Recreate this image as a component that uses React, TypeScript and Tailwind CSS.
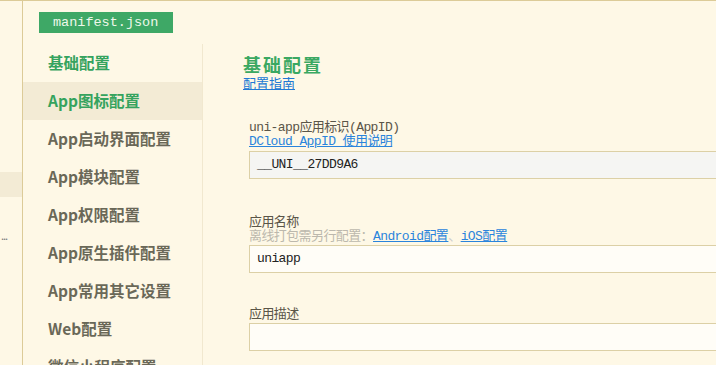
const navItems = [
  "基础配置",
  "App图标配置",
  "App启动界面配置",
  "App模块配置",
  "App权限配置",
  "App原生插件配置",
  "App常用其它设置",
  "Web配置",
  "微信小程序配置",
];

const mono = "font-['Liberation_Mono','Noto_Sans_CJK_SC',monospace] tracking-[-0.6px]";

export default function App() {
  return (
    <div className="w-[716px] h-[365px] overflow-hidden bg-[#fef8e6] border-t border-[#dccb98] flex font-['Noto_Sans_CJK_SC',sans-serif]">
      {/* 左侧窄栏 */}
      <div className="w-[23px] shrink-0 border-r border-[#dccb98] flex flex-col pt-[171px]">
        <div className="h-[25px] bg-[#f3ebd5]" />
        <div className="mt-[32px] pl-[1px] text-[11px] leading-[12px] text-[#777] tracking-[-1px]">...</div>
      </div>

      <div className="flex-1 flex flex-col min-w-0">
        {/* tab */}
        <div className="h-[43px] pl-[16px] pt-[11px]">
          <div className="w-[134px] h-[21px] bg-[#3ea866] text-[#eef8ea] text-[13.5px] leading-[21px] pl-[14px] font-['Liberation_Mono',monospace]">
            manifest.json
          </div>
        </div>

        <div className="flex flex-1 min-h-0">
          {/* 导航 */}
          <div className="w-[180px] shrink-0 border-r border-[#f1e8cf]">
            {navItems.map((item, i) => (
              <div
                key={item}
                className={`h-[38px] flex items-center pl-[25px] text-[15.5px] font-bold ${
                  i === 1 ? "bg-[#f3ebd5]" : ""
                } ${i < 2 ? "text-[#35a35e]" : "text-[#6a6858]"}`}
              >
                {item}
              </div>
            ))}
          </div>

          {/* 内容 */}
          <div className="flex-1 min-w-0 pl-[40px] pt-[10px]">
            <div className="text-[18px] leading-[20px] font-bold text-[#3aa862] tracking-[2px]">基础配置</div>
            <a className="block mt-[1px] text-[13px] leading-[16px] text-[#2179d4] underline w-fit">配置指南</a>

            <div className={`pl-[6px] mt-[30px] ${mono} text-[13px]`}>
              <div className="leading-[14px] text-[#5a5548]">uni-app应用标识(AppID)</div>
              <a className="block leading-[14px] text-[#2a84dc] underline w-fit">DCloud AppID 使用说明</a>
              <div className="mt-[2px] w-[600px] h-[28px] bg-[#f5f5f3] border border-[#dcd0a6] pl-[7px] leading-[26px] text-[#222]">
                __UNI__27DD9A6
              </div>

              <div className="mt-[37px] leading-[14px] text-[#5a5548]">应用名称</div>
              <div className="leading-[14px] text-[#bcb8ad]">
                离线打包需另行配置：
                <a className="text-[#2a84dc] underline">Android配置</a>
                <span className="text-[#ccc]">、</span>
                <a className="text-[#2a84dc] underline">iOS配置</a>
              </div>
              <div className="mt-[1px] w-[600px] h-[28px] bg-[#fffdf7] border border-[#dcd0a6] pl-[7px] leading-[26px] text-[#222]">
                uniapp
              </div>

              <div className="mt-[35px] leading-[14px] text-[#5a5548]">应用描述</div>
              <div className="mt-[1px] w-[600px] h-[28px] bg-[#fffdf7] border border-[#dcd0a6]" />
            </div>
          </div>
        </div>
      </div>
    </div>
  );
}
